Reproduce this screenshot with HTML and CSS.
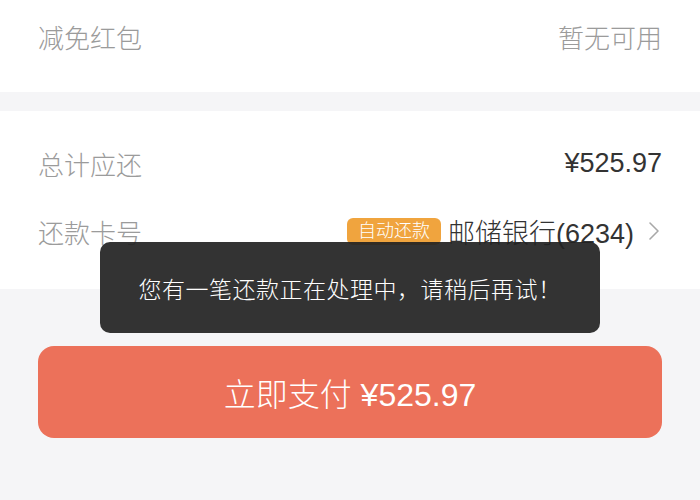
FILE: index.html
```html
<!DOCTYPE html>
<html lang="zh-CN">
<head>
<meta charset="utf-8">
<link rel="stylesheet" href="styles.css">
</head>
<body>
<div class="page">
  <section class="card card-top">
    <div class="row">
      <span class="label">减免红包</span>
      <span class="value muted">暂无可用</span>
    </div>
  </section>
  <section class="card card-main">
    <div class="row">
      <span class="label">总计应还</span>
      <span class="value strong">¥525.97</span>
    </div>
    <div class="row">
      <span class="label">还款卡号</span>
      <span class="value bank">
        <span class="badge">自动还款</span>
        <span class="bank-name">邮储银行(6234)</span>
        <svg class="chevron" width="12" height="20" viewBox="0 0 12 20"><path d="M2 2 L10 10 L2 18" fill="none" stroke="#a8a8a8" stroke-width="1.6" stroke-linecap="round" stroke-linejoin="round"/></svg>
      </span>
    </div>
  </section>
  <div class="actions">
    <button class="pay">立即支付 ¥525.97</button>
  </div>
  <div class="toast">您有一笔还款正在处理中，请稍后再试！</div>
</div>
</body>
</html>
```
FILE: styles.css
```css
* { box-sizing: border-box; }
html, body {
  margin: 0;
  padding: 0;
  background: #f5f5f7;
  font-family: "Liberation Sans", "Noto Sans CJK SC", sans-serif;
  font-weight: 300;
}
.page {
  position: relative;
  width: 700px;
  height: 500px;
  overflow: hidden;
}
.card {
  background: #fff;
  padding: 0 38px;
}
.card-top {
  height: 92px;
  padding-top: 2px;
}
.card-main {
  margin-top: 19px;
  padding-top: 18px;
  padding-bottom: 24px;
}
.row {
  height: 68px;
  display: flex;
  align-items: center;
  justify-content: space-between;
  font-size: 26px;
}
.label { color: #9b9b9b; }
.muted { color: #9b9b9b; }
.strong { color: #333; font-size: 27px; }
.bank {
  display: flex;
  align-items: center;
  color: #333;
}
.bank-name { font-size: 27px; }
.badge {
  background: #f0a43e;
  color: #fff;
  font-size: 18px;
  line-height: 27px;
  height: 27px;
  padding: 0 11px;
  border-radius: 6px;
  margin-right: 7px;
}
.chevron {
  margin-left: 14px;
  margin-right: 2px;
}
.actions {
  padding: 57px 38px 0;
}
.pay {
  display: block;
  width: 100%;
  height: 92px;
  border: none;
  border-radius: 16px;
  background: #ec715a;
  color: #fff;
  font-family: inherit;
  font-weight: 300;
  font-size: 32px;
}
.toast {
  position: absolute;
  left: 100px;
  top: 242px;
  width: 500px;
  height: 91px;
  border-radius: 10px;
  background: rgba(34, 34, 34, 0.92);
  color: #fff;
  font-size: 23px;
  letter-spacing: 0.5px;
  display: flex;
  align-items: center;
  justify-content: center;
}
```
